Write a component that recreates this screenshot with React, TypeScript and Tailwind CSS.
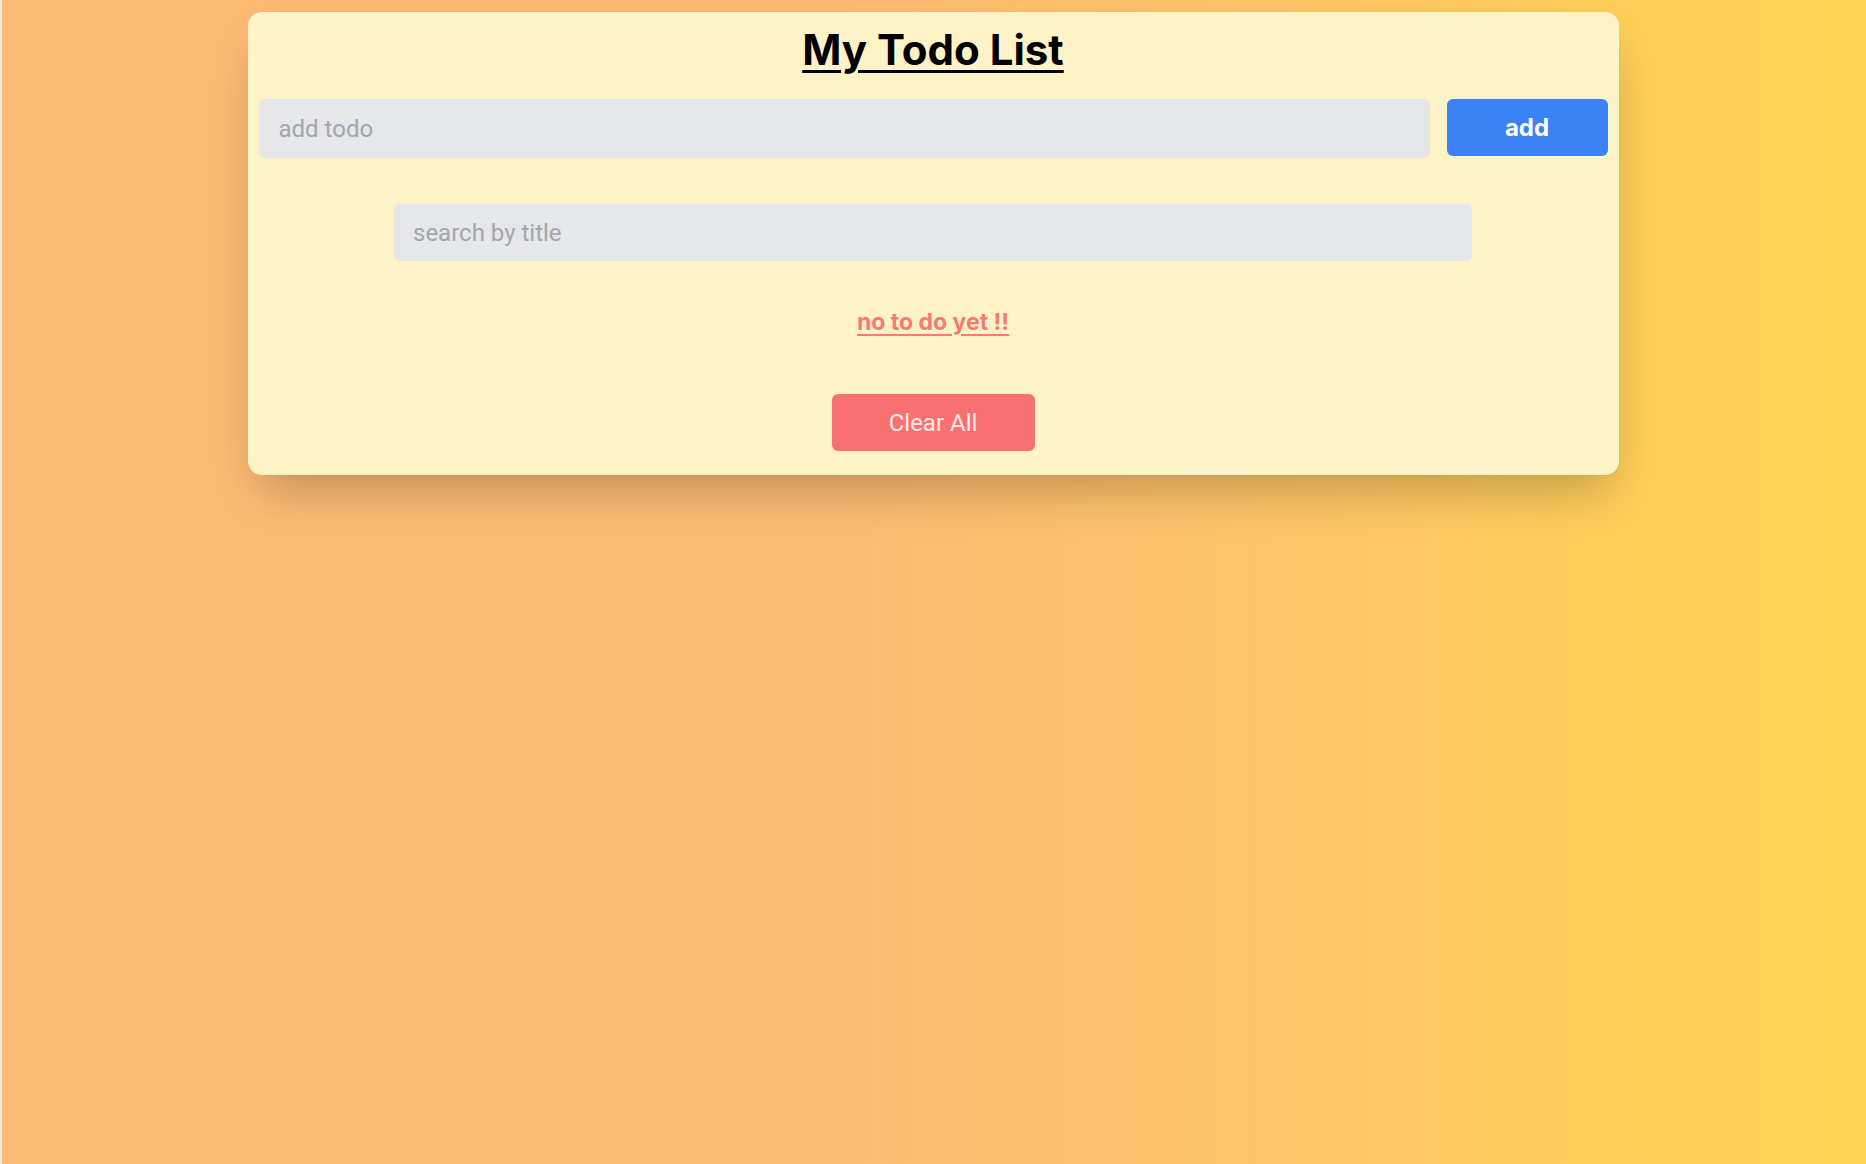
import React, { useState } from 'react';

export default function App() {
  const [todo, setTodo] = useState('');
  const [search, setSearch] = useState('');
  const [todos, setTodos] = useState<string[]>([]);

  const addTodo = () => {
    if (!todo.trim()) return;
    setTodos([...todos, todo.trim()]);
    setTodo('');
  };

  const filtered = todos.filter((t) => t.toLowerCase().includes(search.toLowerCase()));

  return (
    <div className="min-h-screen w-full bg-gradient-to-r from-[#fdba74] from-45% to-[#fdd34e] pt-[12px] font-['Roboto',sans-serif] shadow-[inset_2px_0_0_#efe7dc]">
      <div className="mx-auto flex w-[1371px] flex-col items-center rounded-[14px] bg-[#fef3c7] px-[11px] pb-[24px] pt-[12px] shadow-2xl">
        <h1 className="font-['Inter',sans-serif] text-[42px] font-bold leading-[52px] text-black underline decoration-[3px] underline-offset-[5px]">
          My Todo List
        </h1>

        <div className="mt-[23px] flex w-full items-start gap-[17px]">
          <input
            value={todo}
            onChange={(e) => setTodo(e.target.value)}
            placeholder="add todo"
            className="h-[59px] flex-1 rounded-md bg-[#e5e7eb] pl-[20px] text-[24px] text-gray-800 outline-none placeholder:text-[#a3a6ad]"
          />
          <button
            onClick={addTodo}
            className="h-[57px] w-[161px] rounded-md bg-[#3b82f6] font-['Inter',sans-serif] text-[24px] font-bold text-white"
          >
            add
          </button>
        </div>

        <input
          value={search}
          onChange={(e) => setSearch(e.target.value)}
          placeholder="search by title"
          className="mt-[46px] h-[57px] w-[1078px] rounded-md bg-[#e5e7eb] pl-[19px] text-[24px] text-gray-800 outline-none placeholder:text-[#a3a6ad]"
        />

        {filtered.length === 0 ? (
          <p className="mt-[46px] font-['Inter',sans-serif] text-[23px] font-bold leading-[30px] text-[#f57b73] underline underline-offset-[4px]">
            no to do yet !!
          </p>
        ) : (
          <ul className="mt-[30px] w-[1078px] space-y-2">
            {filtered.map((t, i) => (
              <li key={i} className="rounded-md bg-white px-4 py-2 text-xl">
                {t}
              </li>
            ))}
          </ul>
        )}

        <button
          onClick={() => setTodos([])}
          className="mt-[57px] h-[57px] w-[203px] rounded-md bg-[#f87171] text-[24px] text-[#fde8e8]"
        >
          Clear All
        </button>
      </div>
    </div>
  );
}
